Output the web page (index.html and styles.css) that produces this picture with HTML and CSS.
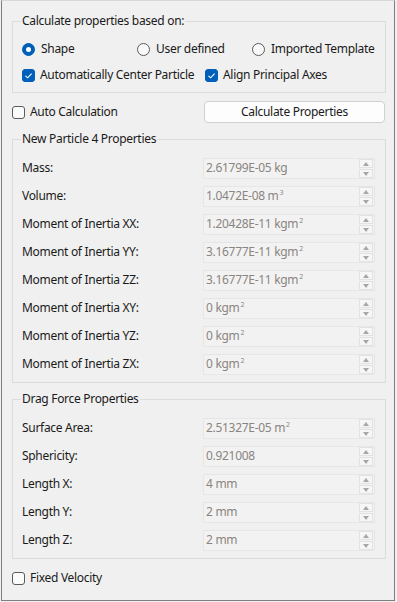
FILE: index.html
```html
<!DOCTYPE html>
<html>
<head>
<meta charset="utf-8">
<link rel="stylesheet" href="styles.css">
</head>
<body>
<div class="frame">
  <fieldset class="group g1">
    <legend>Calculate properties based on:</legend>
    <div class="radios">
      <label class="opt"><span class="radio on"></span>Shape</label>
      <label class="opt"><span class="radio"></span>User defined</label>
      <label class="opt"><span class="radio"></span>Imported Template</label>
    </div>
    <div class="checks">
      <label class="opt c1"><span class="check on"><svg viewBox="0 0 13 13" width="13" height="13"><path d="M3.5 6.8 L5.6 8.8 L9.6 4.6" fill="none" stroke="#fff" stroke-width="1.1"/></svg></span>Automatically Center Particle</label>
      <label class="opt"><span class="check on"><svg viewBox="0 0 13 13" width="13" height="13"><path d="M3.5 6.8 L5.6 8.8 L9.6 4.6" fill="none" stroke="#fff" stroke-width="1.1"/></svg></span>Align Principal Axes</label>
    </div>
  </fieldset>

  <div class="toolbar">
    <label class="opt"><span class="check"></span>Auto Calculation</label>
    <button class="btn">Calculate Properties</button>
  </div>

  <fieldset class="group g2">
    <legend>New Particle 4 Properties</legend>
    <div class="row"><span class="lbl">Mass:</span><div class="spin"><span class="val">2.61799E-05 kg</span><span class="arrows"><span class="up"></span><span class="dn"></span></span></div></div>
    <div class="row"><span class="lbl">Volume:</span><div class="spin"><span class="val">1.0472E-08 m<sup>3</sup></span><span class="arrows"><span class="up"></span><span class="dn"></span></span></div></div>
    <div class="row"><span class="lbl">Moment of Inertia XX:</span><div class="spin"><span class="val">1.20428E-11 kgm<sup>2</sup></span><span class="arrows"><span class="up"></span><span class="dn"></span></span></div></div>
    <div class="row"><span class="lbl">Moment of Inertia YY:</span><div class="spin"><span class="val">3.16777E-11 kgm<sup>2</sup></span><span class="arrows"><span class="up"></span><span class="dn"></span></span></div></div>
    <div class="row"><span class="lbl">Moment of Inertia ZZ:</span><div class="spin"><span class="val">3.16777E-11 kgm<sup>2</sup></span><span class="arrows"><span class="up"></span><span class="dn"></span></span></div></div>
    <div class="row"><span class="lbl">Moment of Inertia XY:</span><div class="spin"><span class="val">0 kgm<sup>2</sup></span><span class="arrows"><span class="up"></span><span class="dn"></span></span></div></div>
    <div class="row"><span class="lbl">Moment of Inertia YZ:</span><div class="spin"><span class="val">0 kgm<sup>2</sup></span><span class="arrows"><span class="up"></span><span class="dn"></span></span></div></div>
    <div class="row"><span class="lbl">Moment of Inertia ZX:</span><div class="spin"><span class="val">0 kgm<sup>2</sup></span><span class="arrows"><span class="up"></span><span class="dn"></span></span></div></div>
  </fieldset>

  <fieldset class="group g3">
    <legend>Drag Force Properties</legend>
    <div class="row"><span class="lbl">Surface Area:</span><div class="spin"><span class="val">2.51327E-05 m<sup>2</sup></span><span class="arrows"><span class="up"></span><span class="dn"></span></span></div></div>
    <div class="row"><span class="lbl">Sphericity:</span><div class="spin"><span class="val">0.921008</span><span class="arrows"><span class="up"></span><span class="dn"></span></span></div></div>
    <div class="row"><span class="lbl">Length X:</span><div class="spin"><span class="val">4 mm</span><span class="arrows"><span class="up"></span><span class="dn"></span></span></div></div>
    <div class="row"><span class="lbl">Length Y:</span><div class="spin"><span class="val">2 mm</span><span class="arrows"><span class="up"></span><span class="dn"></span></span></div></div>
    <div class="row"><span class="lbl">Length Z:</span><div class="spin"><span class="val">2 mm</span><span class="arrows"><span class="up"></span><span class="dn"></span></span></div></div>
  </fieldset>

  <div class="footer">
    <label class="opt"><span class="check"></span>Fixed Velocity</label>
  </div>
</div>
</body>
</html>
```

FILE: styles.css
```css
* { box-sizing: border-box; }
html, body { margin: 0; padding: 0; background: #f0f0f0; }
body {
  font-family: "Noto Sans", "Open Sans", sans-serif;
  font-size: 12px;
  letter-spacing: -0.3px;
  color: #1a1a1a;
  line-height: 16px;
}
.frame {
  margin-left: 1px;
  width: 394px;
  height: 601px;
  border: 1px solid #7e7e7e;
  border-top-color: #d8d8d8;
  padding: 12px 0 0 10px;
}
.group {
  margin: 0;
  width: 374px;
  border: 1px solid #dcdcdc;
  padding: 0 9px 4px 9px;
  min-width: 0;
}
.group legend {
  padding: 0 1px;
  margin-left: -1px;
  line-height: 16px;
}
.g1 { padding-top: 10px; padding-bottom: 7px; }
.radios { display: grid; grid-template-columns: 115px 115px 115px; height: 20px; align-items: center; }
.checks { display: flex; height: 20px; align-items: center; margin-top: 6px; }
.c1 { width: 183px; }
.opt { display: flex; align-items: center; white-space: nowrap; }
.radio {
  width: 13px; height: 13px; border-radius: 50%;
  border: 1px solid #5b5b5b; background: #f9f9f9;
  margin-right: 6px; flex: none; position: relative;
}
.radio.on { background: #005fb8; border-color: #005fb8; }
.radio.on::after {
  content: ""; position: absolute; left: 3px; top: 3px;
  width: 5px; height: 5px; border-radius: 50%; background: #fff;
}
.check {
  width: 13px; height: 13px; border-radius: 3px;
  border: 1px solid #5b5b5b; background: #fbfbfb;
  margin-right: 5px; flex: none; display: flex;
}
.check.on { background: #005fb8; border-color: #005fb8; }
.check svg { margin: -1px; }
.toolbar {
  display: flex; align-items: center; justify-content: space-between;
  margin-top: 8px; height: 22px; width: 373px; padding-left: 0;
}
.btn {
  width: 181px; height: 22px;
  font: inherit; letter-spacing: inherit; color: #1a1a1a;
  background: #fdfdfd; border: 1px solid #d0d0d0; border-radius: 4px;
  padding: 0;
}
.g2 { margin-top: 8px; padding-top: 7px; }
.g3 { margin-top: 8px; padding-top: 7px; }
.row {
  display: grid; grid-template-columns: 181px 172px;
  height: 28px; align-items: center;
}
.spin {
  height: 21px; border: 1px solid #e6e6e6; background: #f2f2f2;
  display: flex; align-items: center; justify-content: space-between;
  padding: 0 1px 0 2px;
}
.val { color: #8a8580; white-space: nowrap; }
.val sup { font-size: 7px; line-height: 0; vertical-align: 5px; margin-left: 1px; }
.arrows { display: flex; flex-direction: column; gap: 1px; }
.arrows span {
  width: 14px; height: 9px; border: 1px solid #e2e2e2; background: #f6f6f6;
  position: relative;
}
.arrows span::after {
  content: ""; position: absolute; left: 3px; width: 0; height: 0;
  border-left: 3px solid transparent; border-right: 3px solid transparent;
}
.arrows .up::after { top: 2px; border-bottom: 4px solid #a6a6a6; }
.arrows .dn::after { top: 2px; border-top: 4px solid #a6a6a6; }
.footer { margin-top: 9px; height: 20px; display: flex; align-items: center; }
```
